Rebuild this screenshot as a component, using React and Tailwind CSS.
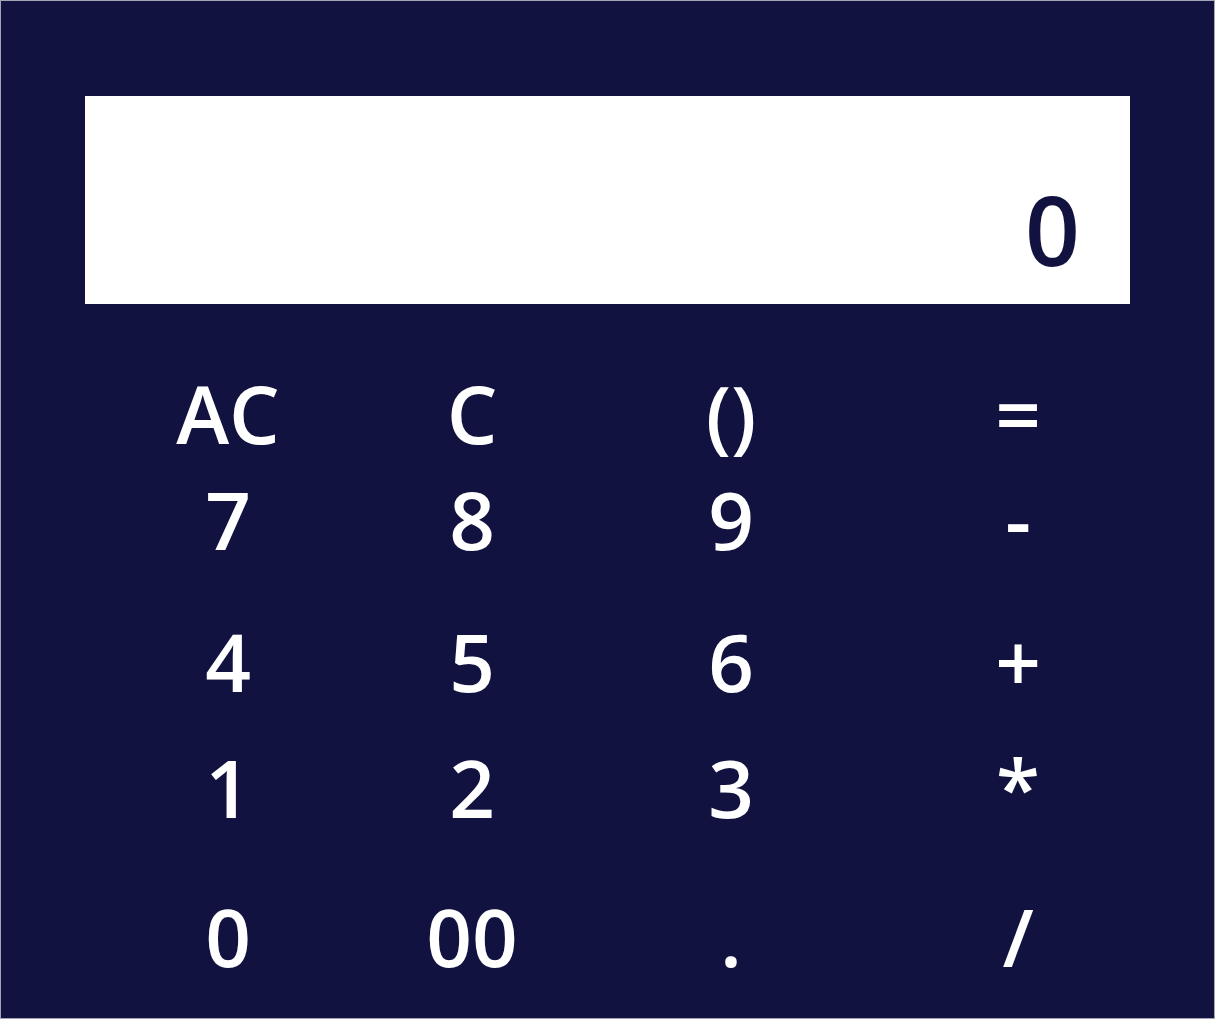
import React, { useState } from "react";

const keys = [
  ["AC", "C", "()", "="],
  ["7", "8", "9", "-"],
  ["4", "5", "6", "+"],
  ["1", "2", "3", "*"],
  ["0", "00", ".", "/"],
];

const App = () => {
  const [display, setDisplay] = useState("0");

  const press = (k) => {
    if (k === "AC") return setDisplay("0");
    if (k === "C") return setDisplay((d) => (d.length > 1 ? d.slice(0, -1) : "0"));
    if (k === "=") {
      try {
        // eslint-disable-next-line no-new-func
        setDisplay(String(Function(`return (${display})`)()));
      } catch (e) {
        setDisplay("0");
      }
      return;
    }
    setDisplay((d) => (d === "0" ? k : d + k));
  };

  return (
    <div
      className="w-[1215px] h-[1019px] border border-[#a4a4b4] bg-[#111240] px-[84px] pt-[95px]"
      style={{ fontFamily: '"Open Sans", "Noto Sans", sans-serif' }}
    >
      <div className="h-[208px] w-full bg-white flex items-end justify-end pr-[50px] pb-[27px]">
        <span className="text-[96px] leading-[96px] font-semibold text-[#111240]">{display}</span>
      </div>

      <div className="mt-[69px] grid grid-cols-[286px_202px_316px_1fr] grid-rows-[106px_142px_126px_149px_80px]">
        {keys.map((row, r) =>
          row.map((k, c) => (
            <button
              key={`${r}-${c}`}
              onClick={() => press(k)}
              className={`h-[80px] self-start text-center text-white text-[80px] leading-[80px] font-semibold ${
                c === 3 ? "pl-[17px]" : ""
              }`}
            >
              {k}
            </button>
          ))
        )}
      </div>
    </div>
  );
};

export default App;
